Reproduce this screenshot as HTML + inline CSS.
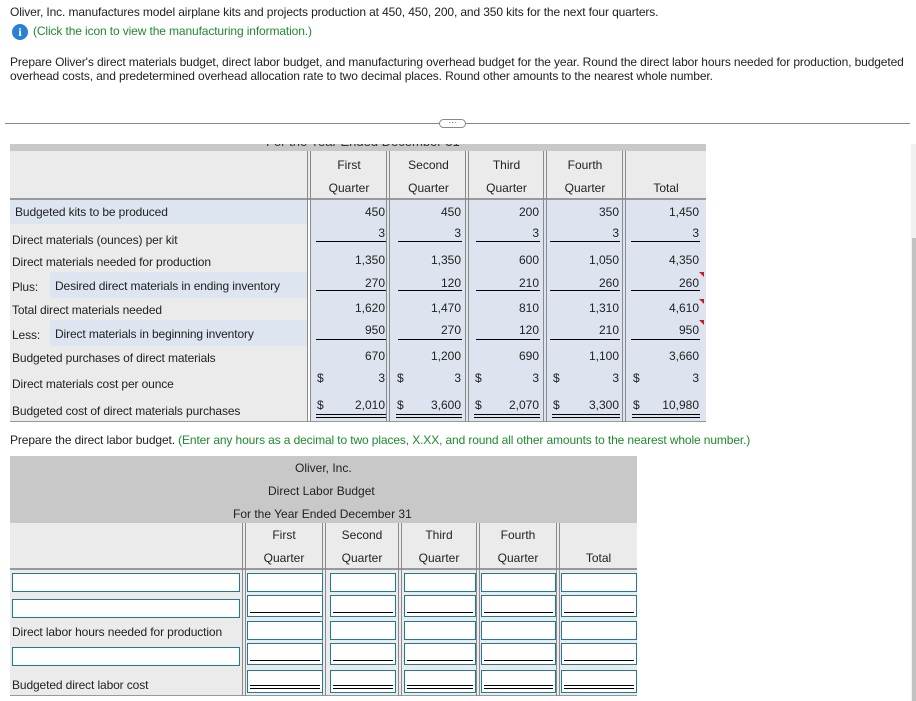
<!DOCTYPE html>
<html><head><meta charset="utf-8"><style>
*{margin:0;padding:0;box-sizing:border-box}
body{width:916px;height:701px;background:#fff;font-family:"Liberation Sans",Arial,sans-serif;font-size:12px;color:#222;position:relative;overflow:hidden}
.a{position:absolute;white-space:nowrap;line-height:14px}
.r{text-align:right}
.c{text-align:center}
.sep{position:absolute;width:4px;border-left:1px solid #8a8a8a;border-right:1px solid #8a8a8a}
.ul{position:absolute;height:1px;background:#000}
.dl{position:absolute;height:4px;border-top:1px solid #000;border-bottom:1px solid #000}
.in{position:absolute;border:1.5px solid #1f7a99;background:#fff}
.tri{position:absolute;width:0;height:0;border-top:5px solid #c0202a;border-left:5px solid transparent}
.p{letter-spacing:-0.12px}
</style></head><body>
<div class="a p" style="left:10px;top:5px">Oliver, Inc. manufactures model airplane kits and projects production at 450, 450, 200, and 350 kits for the next four quarters.</div>
<div class="a" style="left:12px;top:24px;width:16px;height:16px;border-radius:50%;background:#2c7fd4;color:#fff;font-weight:bold;font-size:12px;line-height:16px;text-align:center;font-family:'Liberation Serif',serif">i</div>
<div class="a p" style="left:33px;top:24px;color:#1e8a2e">(Click the icon to view the manufacturing information.)</div>
<div class="a p" style="left:10px;top:55px">Prepare Oliver's direct materials budget, direct labor budget, and manufacturing overhead budget for the year. Round the direct labor hours needed for production, budgeted</div>
<div class="a p" style="left:10px;top:69px">overhead costs, and predetermined overhead allocation rate to two decimal places. Round other amounts to the nearest whole number.</div>

<div style="position:absolute;left:5px;top:123px;width:905px;height:1px;background:#888"></div>
<div style="position:absolute;left:439px;top:119px;width:27px;height:9px;border:1px solid #888;border-radius:5px;background:#fff;font-size:8px;line-height:6px;text-align:center;color:#333">···</div>

<div style="position:absolute;left:911px;top:144px;width:5px;height:557px;background:#f0f0f0"></div>
<div style="position:absolute;left:912px;top:238px;width:4px;height:463px;background:#c2c2c2"></div>

<div style="position:absolute;left:10px;top:144px;width:696px;height:7px;background:#c8c8c8;overflow:hidden">
<div class="a" style="left:256px;top:-9px;font-size:13px;color:#333">For the Year Ended December 31</div></div>
<div style="position:absolute;left:10px;top:151px;width:696px;height:49px;background:#ebebeb;border-bottom:2px solid #999"></div>
<div style="position:absolute;left:10px;top:200px;width:297px;height:222px;background:#ebebeb"></div>
<div style="position:absolute;left:10px;top:200px;width:297px;height:24px;background:#dde5f0"></div>
<div style="position:absolute;left:50px;top:272px;width:257px;height:26px;background:#dde5f0"></div>
<div style="position:absolute;left:50px;top:320px;width:257px;height:26px;background:#dde5f0"></div>
<div style="position:absolute;left:310px;top:200px;width:396px;height:222px;background:#dde4ef"></div>
<div style="position:absolute;left:10px;top:421px;width:696px;height:1px;background:#999"></div>
<div class="sep" style="left:307px;top:151px;height:271px"></div>
<div class="sep" style="left:386px;top:151px;height:271px"></div>
<div class="sep" style="left:465px;top:151px;height:271px"></div>
<div class="sep" style="left:543px;top:151px;height:271px"></div>
<div class="sep" style="left:622px;top:151px;height:271px"></div>

<div class="a c" style="left:311px;width:76px;top:158px">First</div><div class="a c" style="left:311px;width:76px;top:181px">Quarter</div>
<div class="a c" style="left:391px;width:75px;top:158px">Second</div><div class="a c" style="left:391px;width:75px;top:181px">Quarter</div>
<div class="a c" style="left:469px;width:75px;top:158px">Third</div><div class="a c" style="left:469px;width:75px;top:181px">Quarter</div>
<div class="a c" style="left:547px;width:76px;top:158px">Fourth</div><div class="a c" style="left:547px;width:76px;top:181px">Quarter</div>
<div class="a c" style="left:627px;width:78px;top:181px">Total</div>

<div class="a p" style="left:15px;top:205px">Budgeted kits to be produced</div>
<div class="a p" style="left:12px;top:233px">Direct materials (ounces) per kit</div>
<div class="a p" style="left:12px;top:255px">Direct materials needed for production</div>
<div class="a p" style="left:12px;top:280px">Plus:</div><div class="a p" style="left:55px;top:279px">Desired direct materials in ending inventory</div>
<div class="a p" style="left:12px;top:303px">Total direct materials needed</div>
<div class="a p" style="left:12px;top:328px">Less:</div><div class="a p" style="left:55px;top:327px">Direct materials in beginning inventory</div>
<div class="a p" style="left:12px;top:351px">Budgeted purchases of direct materials</div>
<div class="a p" style="left:12px;top:377px">Direct materials cost per ounce</div>
<div class="a p" style="left:12px;top:404px">Budgeted cost of direct materials purchases</div>

<div class="a r" style="left:310px;width:75px;top:205px">450</div>
<div class="a r" style="left:310px;width:75px;top:226px">3</div>
<div class="a r" style="left:310px;width:75px;top:253px">1,350</div>
<div class="a r" style="left:310px;width:75px;top:276px">270</div>
<div class="a r" style="left:310px;width:75px;top:301px">1,620</div>
<div class="a r" style="left:310px;width:75px;top:323px">950</div>
<div class="a r" style="left:310px;width:75px;top:349px">670</div>
<div class="a r" style="left:310px;width:75px;top:371px">3</div>
<div class="a r" style="left:310px;width:75px;top:398px">2,010</div>
<div class="a" style="left:317px;top:371px">$</div><div class="a" style="left:317px;top:398px">$</div>

<div class="a r" style="left:390px;width:71px;top:205px">450</div>
<div class="a r" style="left:390px;width:71px;top:226px">3</div>
<div class="a r" style="left:390px;width:71px;top:253px">1,350</div>
<div class="a r" style="left:390px;width:71px;top:276px">120</div>
<div class="a r" style="left:390px;width:71px;top:301px">1,470</div>
<div class="a r" style="left:390px;width:71px;top:323px">270</div>
<div class="a r" style="left:390px;width:71px;top:349px">1,200</div>
<div class="a r" style="left:390px;width:71px;top:371px">3</div>
<div class="a r" style="left:390px;width:71px;top:398px">3,600</div>
<div class="a" style="left:397px;top:371px">$</div><div class="a" style="left:397px;top:398px">$</div>

<div class="a r" style="left:468px;width:71px;top:205px">200</div>
<div class="a r" style="left:468px;width:71px;top:226px">3</div>
<div class="a r" style="left:468px;width:71px;top:253px">600</div>
<div class="a r" style="left:468px;width:71px;top:276px">210</div>
<div class="a r" style="left:468px;width:71px;top:301px">810</div>
<div class="a r" style="left:468px;width:71px;top:323px">120</div>
<div class="a r" style="left:468px;width:71px;top:349px">690</div>
<div class="a r" style="left:468px;width:71px;top:371px">3</div>
<div class="a r" style="left:468px;width:71px;top:398px">2,070</div>
<div class="a" style="left:475px;top:371px">$</div><div class="a" style="left:475px;top:398px">$</div>

<div class="a r" style="left:546px;width:73px;top:205px">350</div>
<div class="a r" style="left:546px;width:73px;top:226px">3</div>
<div class="a r" style="left:546px;width:73px;top:253px">1,050</div>
<div class="a r" style="left:546px;width:73px;top:276px">260</div>
<div class="a r" style="left:546px;width:73px;top:301px">1,310</div>
<div class="a r" style="left:546px;width:73px;top:323px">210</div>
<div class="a r" style="left:546px;width:73px;top:349px">1,100</div>
<div class="a r" style="left:546px;width:73px;top:371px">3</div>
<div class="a r" style="left:546px;width:73px;top:398px">3,300</div>
<div class="a" style="left:553px;top:371px">$</div><div class="a" style="left:553px;top:398px">$</div>

<div class="a r" style="left:626px;width:73px;top:205px">1,450</div>
<div class="a r" style="left:626px;width:73px;top:226px">3</div>
<div class="a r" style="left:626px;width:73px;top:253px">4,350</div>
<div class="a r" style="left:626px;width:73px;top:276px">260</div>
<div class="a r" style="left:626px;width:73px;top:301px">4,610</div>
<div class="a r" style="left:626px;width:73px;top:323px">950</div>
<div class="a r" style="left:626px;width:73px;top:349px">3,660</div>
<div class="a r" style="left:626px;width:73px;top:371px">3</div>
<div class="a r" style="left:626px;width:73px;top:398px">10,980</div>
<div class="a" style="left:633px;top:371px">$</div><div class="a" style="left:633px;top:398px">$</div>
<div class="tri" style="left:699px;top:272px"></div>
<div class="tri" style="left:699px;top:299px"></div>
<div class="tri" style="left:699px;top:320px"></div>

<div class="ul" style="left:316px;width:70px;top:241px"></div><div class="ul" style="left:398px;width:64px;top:241px"></div><div class="ul" style="left:476px;width:64px;top:241px"></div><div class="ul" style="left:550px;width:70px;top:241px"></div><div class="ul" style="left:631px;width:69px;top:241px"></div>
<div class="ul" style="left:316px;width:70px;top:290px"></div><div class="ul" style="left:398px;width:64px;top:290px"></div><div class="ul" style="left:476px;width:64px;top:290px"></div><div class="ul" style="left:550px;width:70px;top:290px"></div><div class="ul" style="left:631px;width:69px;top:290px"></div>
<div class="ul" style="left:316px;width:70px;top:339px"></div><div class="ul" style="left:398px;width:64px;top:339px"></div><div class="ul" style="left:476px;width:64px;top:339px"></div><div class="ul" style="left:550px;width:70px;top:339px"></div><div class="ul" style="left:631px;width:69px;top:339px"></div>
<div class="dl" style="left:316px;width:70px;top:414px"></div><div class="dl" style="left:396px;width:66px;top:414px"></div><div class="dl" style="left:474px;width:66px;top:414px"></div><div class="dl" style="left:552px;width:68px;top:414px"></div><div class="dl" style="left:632px;width:68px;top:414px"></div>

<div class="a p" style="left:10px;top:433px">Prepare the direct labor budget. <span style="color:#1e8a2e">(Enter any hours as a decimal to two places, X.XX, and round all other amounts to the nearest whole number.)</span></div>

<div style="position:absolute;left:10px;top:456px;width:627px;height:67px;background:#c8c8c8"></div>
<div class="a" style="left:295px;top:461px">Oliver, Inc.</div>
<div class="a" style="left:268px;top:484px">Direct Labor Budget</div>
<div class="a" style="left:233px;top:507px">For the Year Ended December 31</div>
<div style="position:absolute;left:10px;top:523px;width:627px;height:47px;background:#ebebeb;border-bottom:2px solid #999"></div>
<div style="position:absolute;left:10px;top:570px;width:627px;height:126px;background:#ebebeb;border-bottom:1px solid #999"></div>
<div class="sep" style="left:242px;top:523px;height:173px"></div>
<div class="sep" style="left:322px;top:523px;height:173px"></div>
<div class="sep" style="left:398px;top:523px;height:173px"></div>
<div class="sep" style="left:476px;top:523px;height:173px"></div>
<div class="sep" style="left:556px;top:523px;height:173px"></div>
<div class="a c" style="left:246px;width:76px;top:528px">First</div><div class="a c" style="left:246px;width:76px;top:551px">Quarter</div>
<div class="a c" style="left:326px;width:72px;top:528px">Second</div><div class="a c" style="left:326px;width:72px;top:551px">Quarter</div>
<div class="a c" style="left:402px;width:74px;top:528px">Third</div><div class="a c" style="left:402px;width:74px;top:551px">Quarter</div>
<div class="a c" style="left:480px;width:76px;top:528px">Fourth</div><div class="a c" style="left:480px;width:76px;top:551px">Quarter</div>
<div class="a c" style="left:560px;width:77px;top:551px">Total</div>

<div class="in" style="left:12px;top:573px;width:228px;height:19px"></div>
<div class="in" style="left:12px;top:599px;width:228px;height:19px"></div>
<div class="a p" style="left:12px;top:625px">Direct labor hours needed for production</div>
<div class="in" style="left:12px;top:647px;width:228px;height:19px"></div>
<div class="a p" style="left:12px;top:678px">Budgeted direct labor cost</div>

<div class="in" style="left:247px;top:573px;width:76px;height:19px"></div>
<div class="in" style="left:330px;top:573px;width:66px;height:19px"></div>
<div class="in" style="left:404px;top:573px;width:72px;height:19px"></div>
<div class="in" style="left:481px;top:573px;width:75px;height:19px"></div>
<div class="in" style="left:561px;top:573px;width:76px;height:19px"></div>

<div class="in" style="left:247px;top:595px;width:76px;height:22px"></div>
<div class="in" style="left:330px;top:595px;width:66px;height:22px"></div>
<div class="in" style="left:404px;top:595px;width:72px;height:22px"></div>
<div class="in" style="left:481px;top:595px;width:75px;height:22px"></div>
<div class="in" style="left:561px;top:595px;width:76px;height:22px"></div>
<div class="ul" style="left:250px;width:70px;top:612px"></div><div class="ul" style="left:333px;width:60px;top:612px"></div><div class="ul" style="left:407px;width:66px;top:612px"></div><div class="ul" style="left:484px;width:69px;top:612px"></div><div class="ul" style="left:564px;width:70px;top:612px"></div>

<div class="in" style="left:247px;top:621px;width:76px;height:19px"></div>
<div class="in" style="left:330px;top:621px;width:66px;height:19px"></div>
<div class="in" style="left:404px;top:621px;width:72px;height:19px"></div>
<div class="in" style="left:481px;top:621px;width:75px;height:19px"></div>
<div class="in" style="left:561px;top:621px;width:76px;height:19px"></div>

<div class="in" style="left:247px;top:643px;width:76px;height:22px"></div>
<div class="in" style="left:330px;top:643px;width:66px;height:22px"></div>
<div class="in" style="left:404px;top:643px;width:72px;height:22px"></div>
<div class="in" style="left:481px;top:643px;width:75px;height:22px"></div>
<div class="in" style="left:561px;top:643px;width:76px;height:22px"></div>
<div class="ul" style="left:250px;width:70px;top:660px"></div><div class="ul" style="left:333px;width:60px;top:660px"></div><div class="ul" style="left:407px;width:66px;top:660px"></div><div class="ul" style="left:484px;width:69px;top:660px"></div><div class="ul" style="left:564px;width:70px;top:660px"></div>

<div class="in" style="left:247px;top:670px;width:76px;height:23px"></div>
<div class="in" style="left:330px;top:670px;width:66px;height:23px"></div>
<div class="in" style="left:404px;top:670px;width:72px;height:23px"></div>
<div class="in" style="left:481px;top:670px;width:75px;height:23px"></div>
<div class="in" style="left:561px;top:670px;width:76px;height:23px"></div>
<div class="dl" style="left:250px;width:70px;top:685px"></div><div class="dl" style="left:333px;width:60px;top:685px"></div><div class="dl" style="left:407px;width:66px;top:685px"></div><div class="dl" style="left:484px;width:69px;top:685px"></div><div class="dl" style="left:564px;width:70px;top:685px"></div>
</body></html>
